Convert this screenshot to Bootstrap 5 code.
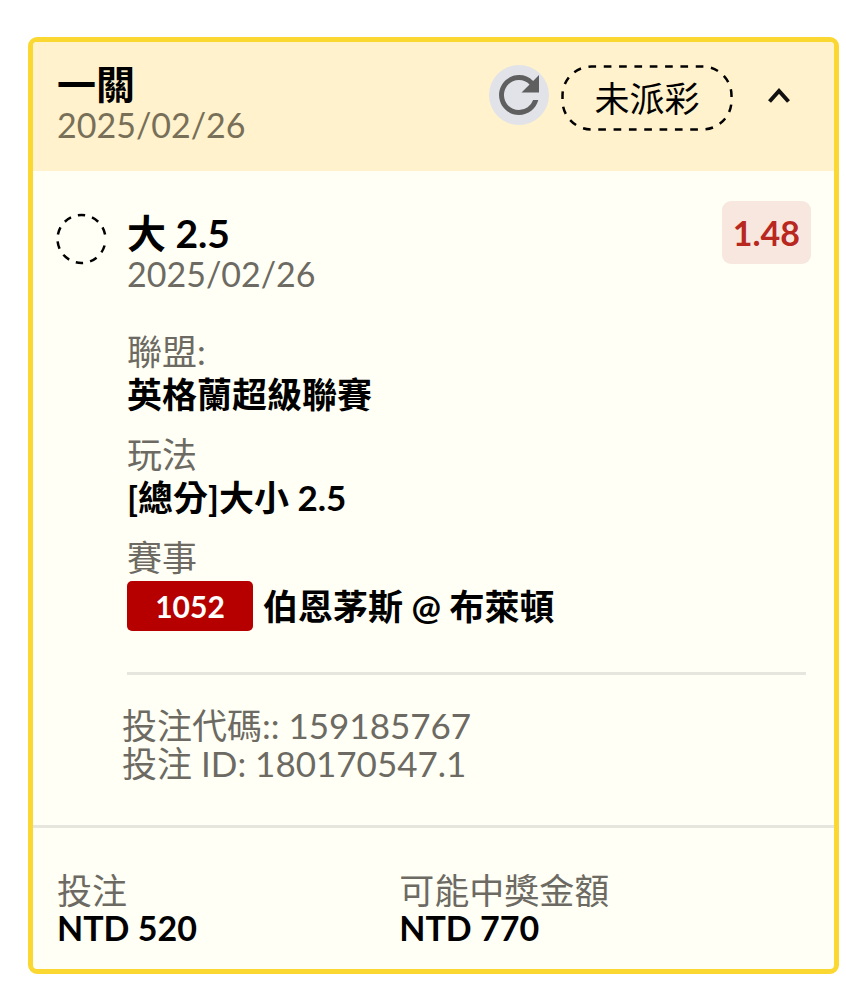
<!DOCTYPE html>
<html lang="zh-Hant">
<head>
<meta charset="utf-8">
<meta name="viewport" content="width=device-width, initial-scale=1">
<title>投注 180170547.1</title>
<link href="https://cdn.jsdelivr.net/npm/bootstrap@5.3.0/dist/css/bootstrap.min.css" rel="stylesheet">
<style>
  body { font-family: Lato, "Noto Sans CJK TC", sans-serif; font-size: 35px; line-height: 38px; color: #000; background: #fff; }
  main { padding: 37px 7px 24px 28px; }
  .slip { background: #fffff5; border: 5px solid #fbd732; border-radius: 9px; overflow: hidden; --bs-card-color: #000; }
  .slip-head { background: #fff2cc; padding: 20px 31px 27px 24px; }
  .slip-title { font-size: 39px; line-height: 44px; font-weight: 700; margin: 0; }
  .soft { color: #6c6a62; }
  .slip-head .soft { color: #776f58; }
  time, .odds, .sum { font-size: 34px; }
  .tools { margin-top: 3px; }
  .round-btn { width: 60px; height: 60px; background: #e1e3e8; color: #5f5f5f; margin-right: 12px; }
  .round-btn svg, .fold-btn svg { width: 100%; height: 100%; display: block; }
  .state { width: 172px; height: 66px; margin-right: 22px; }
  .state svg { inset: 0; }
  .fold-btn { width: 48px; height: 60px; }
  .slip-body { padding: 30px 23px 43px 23px; }
  .mark-col { width: 52px; margin-right: 19px; padding-top: 12px; }
  .pick { padding-top: 10px; }
  .odds { height: 63px; padding: 0 11px; border-radius: 9px; background: #f8e7df; color: #b9281f; }
  .facts { margin: 37px 0 0 71px; }
  .facts dt { font-weight: 400; line-height: 43px; margin-top: 17px; }
  .facts dd { font-weight: 700; line-height: 43px; margin: 0; }
  .facts .match { padding-top: 2px; line-height: 50px; }
  .match-no { width: 126px; height: 50px; margin-right: 10px; border-radius: 5px; background: #b60000; color: #fff; font-size: 30px; }
  .rule { height: 3px; border: 0; background: #e6e6de; opacity: 1; margin: 0; }
  .inner-rule { margin: 41px 5px 31px 71px; }
  .codes { margin-left: 66px; }
  .totals { display: grid; grid-template-columns: 5fr 6fr; padding: 43px 24px 22px; margin: 0; }
  .totals dt { font-weight: 400; }
  .totals dd { margin: 0; font-weight: 700; }
</style>
</head>
<body>
<main>
  <article class="card slip">
    <header class="slip-head d-flex align-items-start">
      <div class="flex-grow-1">
        <h1 class="slip-title">一關</h1>
        <time class="soft d-block" datetime="2025-02-26">2025/02/26</time>
      </div>
      <div class="tools d-flex align-items-start">
        <button type="button" class="btn round-btn rounded-circle border-0 p-0" aria-label="重新整理">
          <svg viewBox="0 0 24 24" fill="currentColor" aria-hidden="true"><path d="M17.65 6.35A7.96 7.96 0 0 0 12 4c-4.42 0-7.99 3.58-7.99 8s3.57 8 7.99 8c3.73 0 6.84-2.55 7.73-6h-2.08A5.99 5.99 0 0 1 12 18c-3.31 0-6-2.69-6-6s2.69-6 6-6c1.66 0 3.14.69 4.22 1.78L13 11h7V4l-2.35 2.35z"/></svg>
        </button>
        <div class="state position-relative d-flex align-items-center justify-content-center">
          <svg class="position-absolute" width="172" height="66" viewBox="0 0 172 66" fill="none" stroke="#000" stroke-width="2.5" aria-hidden="true"><rect x="1.5" y="1.5" width="169" height="63" rx="29" pathLength="54" stroke-dasharray="1 1" stroke-dashoffset=".4"/></svg>
          <span>未派彩</span>
        </div>
        <button type="button" class="btn fold-btn border-0 p-0" aria-label="收合" aria-expanded="true">
          <svg viewBox="0 0 48 60" fill="none" stroke="#111" stroke-width="4" aria-hidden="true"><path d="M14.5 36.5 24 26l9.5 10.5"/></svg>
        </button>
      </div>
    </header>

    <section class="slip-body">
      <div class="d-flex align-items-start">
        <div class="mark-col">
          <svg class="d-block" width="52" height="52" viewBox="0 0 52 52" fill="none" stroke="#000" stroke-width="2.5" aria-hidden="true"><circle cx="25.5" cy="26" r="24" pathLength="360" stroke-dasharray="18 17" stroke-dashoffset="-16"/></svg>
        </div>
        <div class="pick flex-grow-1">
          <h2 class="slip-title">大 2.5</h2>
          <time class="soft d-block" datetime="2025-02-26">2025/02/26</time>
        </div>
        <strong class="odds d-flex align-items-center">1.48</strong>
      </div>

      <dl class="facts">
        <dt class="soft">聯盟:</dt>
        <dd>英格蘭超級聯賽</dd>
        <dt class="soft">玩法</dt>
        <dd>[總分]大小 2.5</dd>
        <dt class="soft">賽事</dt>
        <dd class="match d-flex align-items-center"><span class="match-no d-flex align-items-center justify-content-center">1052</span>伯恩茅斯 @ 布萊頓</dd>
      </dl>
      <hr class="rule inner-rule">
      <div class="codes soft">
        <div>投注代碼:: 159185767</div>
        <div>投注 ID: 180170547.1</div>
      </div>
    </section>

    <hr class="rule">
    <dl class="totals">
      <div>
        <dt class="soft">投注</dt>
        <dd class="sum">NTD 520</dd>
      </div>
      <div>
        <dt class="soft">可能中獎金額</dt>
        <dd class="sum">NTD 770</dd>
      </div>
    </dl>
  </article>
</main>
<script src="https://cdn.jsdelivr.net/npm/bootstrap@5.3.0/dist/js/bootstrap.bundle.min.js"></script>
</body>
</html>
